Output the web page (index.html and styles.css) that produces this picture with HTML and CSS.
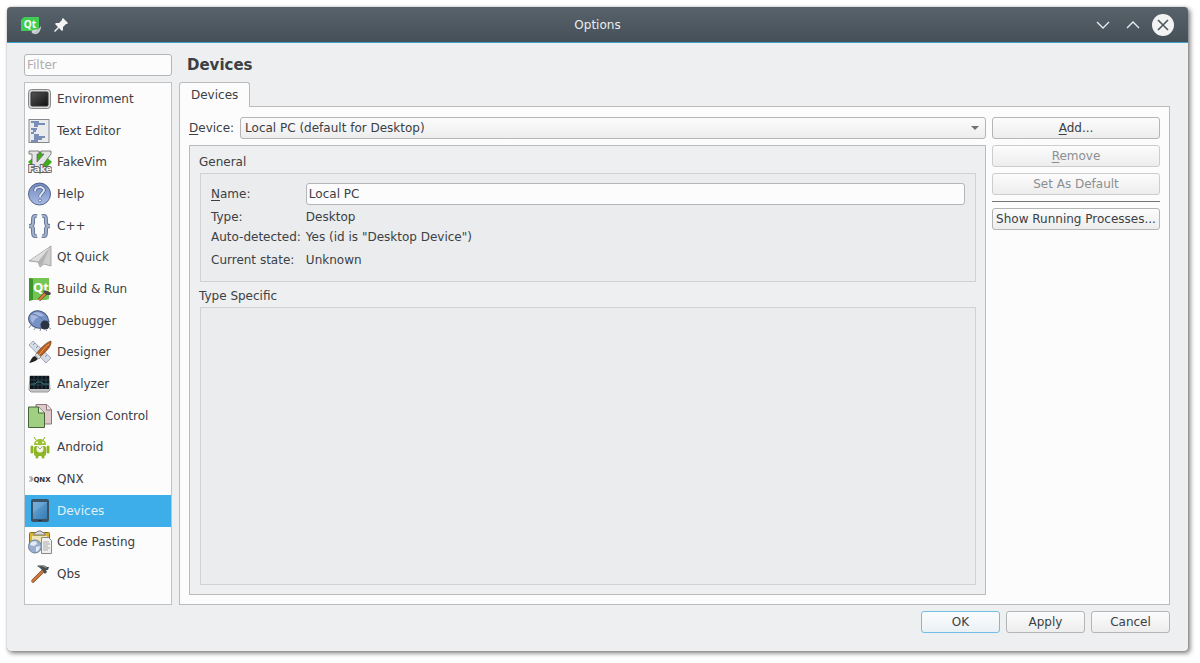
FILE: index.html
```html
<!DOCTYPE html>
<html lang="en">
<head>
  <meta charset="UTF-8">
  <meta name="viewport" content="width=device-width, initial-scale=1.0">
  <title>Options</title>
  <link rel="stylesheet" href="styles.css">
</head>
<body>
  <div class="window">
    <header class="titlebar">
      <div class="title-left">
        <svg class="app-icon" viewBox="0 0 20 20" width="20" height="20">
          <path d="M3 2h15v11l-4 3H0V5z" fill="#41cd52"/>
          <text x="9" y="13" text-anchor="middle" class="qt-text">Qt</text>
          <path d="M20 11c0 5-3 9-7 8-3-1-3-3-1-4 3 0 6-1 8-4z" fill="#d0d3d4"/>
          <path d="M12 19c3-1 5-3 7-6" stroke="#a4a9ac" stroke-width=".8" fill="none"/>
        </svg>
        <svg viewBox="0 0 16 16" width="16" height="16">
          <path d="M10 1l5 5-1 1-1 0-3 3 0 3-1 1-3-3-4 4-1-1 4-4-3-3 1-1h3l3-3 0-1z" fill="#f3f4f4"/>
        </svg>
      </div>
      <span class="title">Options</span>
      <div class="title-right">
        <button class="win-btn" aria-label="Minimize">
          <svg viewBox="0 0 22 22" width="22" height="22"><path d="M5 8l6 6 6-6" fill="none" stroke="#eceeef" stroke-width="1.3"/></svg>
        </button>
        <button class="win-btn" aria-label="Maximize">
          <svg viewBox="0 0 22 22" width="22" height="22"><path d="M5 14l6-6 6 6" fill="none" stroke="#eceeef" stroke-width="1.3"/></svg>
        </button>
        <button class="win-btn" aria-label="Close">
          <svg viewBox="0 0 22 22" width="22" height="22"><circle cx="11" cy="11" r="11" fill="#f2f3f3"/><path d="M6 6l10 10M16 6L6 16" stroke="#4d565d" stroke-width="1.6"/></svg>
        </button>
      </div>
    </header>

    <main class="content">
      <aside class="sidebar">
        <input class="filter" type="text" placeholder="Filter" aria-label="Filter">
        <nav class="categories">
          <a href="#environment">
            <svg viewBox="0 0 24 24">
              <defs><linearGradient id="screen" x1="0" y1="0" x2="1" y2="1"><stop offset="0" stop-color="#555"/><stop offset=".5" stop-color="#333"/><stop offset="1" stop-color="#111"/></linearGradient></defs>
              <rect x=".5" y="2.5" width="22" height="19" rx="3" fill="#d8d8d8" stroke="#888"/>
              <rect x="3" y="5" width="17" height="14" rx="1" fill="url(#screen)" stroke="#333"/>
            </svg>
            Environment
          </a>
          <a href="#text-editor">
            <svg viewBox="0 0 24 24">
              <rect x="1" y=".5" width="20" height="23" fill="#e9ebed" stroke="#85898e"/>
              <path d="M3 3h8M6 5h11M6 7h4M3 10h6M5 12h3M3 14h3M6 16h5M6 18h11M6 20h8M3 22h7" stroke="#5672a5" stroke-width="1.3"/>
            </svg>
            Text Editor
          </a>
          <a href="#fakevim">
            <svg viewBox="0 0 24 24">
              <path d="M12 1l12 11-12 12L0 12z" fill="#3fae1b"/>
              <path d="M1 1h10v3H9v8l7-8h-3V1h10v3L11 20H4V4H1z" fill="#e4e6e5" stroke="#666" stroke-width=".8"/>
              <text x="12" y="22" text-anchor="middle" class="fake-text">Fake</text>
            </svg>
            FakeVim
          </a>
          <a href="#help">
            <svg viewBox="0 0 24 24">
              <defs><linearGradient id="help" x1="0" y1="0" x2="0" y2="1"><stop offset="0" stop-color="#7289bd"/><stop offset="1" stop-color="#a9bce6"/></linearGradient></defs>
              <circle cx="11.5" cy="12" r="11" fill="url(#help)" stroke="#53658c"/>
              <path d="M7 9c0-5 9-5 9-1 0 3-4 3-4 7" fill="none" stroke="#4d5f84" stroke-width="3.4"/>
              <path d="M7 9c0-5 9-5 9-1 0 3-4 3-4 7" fill="none" stroke="#dfe6f5" stroke-width="2"/>
              <circle cx="12" cy="18.5" r="1.5" fill="#dfe6f5" stroke="#4d5f84" stroke-width=".7"/>
            </svg>
            Help
          </a>
          <a href="#cpp">
            <svg viewBox="0 0 24 24">
              <path d="M9 2C5 1 5 4 5 7v2c0 2-2 3-4 3 2 0 4 1 4 3v2c0 3 0 6 4 5M14 2c4-1 4 2 4 5v2c0 2 2 3 4 3-2 0-4 1-4 3v2c0 3 0 6-4 5" fill="none" stroke="#66799c" stroke-width="4"/>
              <path d="M9 2C5 1 5 4 5 7v2c0 2-2 3-4 3 2 0 4 1 4 3v2c0 3 0 6 4 5M14 2c4-1 4 2 4 5v2c0 2 2 3 4 3-2 0-4 1-4 3v2c0 3 0 6-4 5" fill="none" stroke="#a3b0c9" stroke-width="2"/>
            </svg>
            C++
          </a>
          <a href="#qt-quick">
            <svg viewBox="0 0 24 24">
              <path d="M23 1v20l-7-2-4 3-2-5-9-1z" fill="#cecece" stroke="#999" stroke-width=".8"/>
              <path d="M22 2L10 17l2 5 3-4z" fill="#b3b3b3"/>
              <path d="M22 2L3 15l7 1z" fill="#dedede"/>
            </svg>
            Qt Quick
          </a>
          <a href="#build-run">
            <svg viewBox="0 0 24 24">
              <path d="M1 1h20v21l-3 1H1z" fill="#74c654"/>
              <path d="M1 1l4 1v21l-4 1z" fill="#3a9627"/>
              <text x="5" y="15" class="build-text">Qt</text>
              <path d="M11 23l7-7" stroke="#7c4115" stroke-width="3.2"/>
              <path d="M11 23l7-7" stroke="#d98445" stroke-width="2"/>
              <path d="M15 14c3-1 5 0 8 2l-1 2-2 0-2 0z" fill="#474747"/>
            </svg>
            Build &amp; Run
          </a>
          <a href="#debugger">
            <svg viewBox="0 0 24 24">
              <path d="M3 16l-2 3M8 18l-2 3M13 19l-1 3M20 18l3 2M20 13l2-1M18 21l1 1" stroke="#6b7280" stroke-width=".8"/>
              <ellipse cx="10.5" cy="10.5" rx="10" ry="8.5" transform="rotate(20 10.5 10.5)" fill="#7892c6" stroke="#43577f"/>
              <path d="M3 6c5-5 11-2 13 1-5 0-9 2-11 7-3-3-3-6-2-8z" fill="#a4b7df"/>
              <path d="M3 5c5 0 12 4 14 9" fill="none" stroke="#5f76aa"/>
              <circle cx="17" cy="16" r="4.5" fill="#2b3443"/>
            </svg>
            Debugger
          </a>
          <a href="#designer">
            <svg viewBox="0 0 24 24">
              <path d="M1 5l4-4 18 17-5 5z" fill="#d5dbe5" stroke="#a0a9b8"/>
              <path d="M5 5l2-2M8 8l2-2M11 11l2-2M14 14l2-2M17 17l2-2" stroke="#8994a8"/>
              <path d="M23 1c1 6-7 12-11 16l-4-3C12 9 17 3 23 1z" fill="#b96023" stroke="#6f3b17" stroke-width=".7"/>
              <path d="M21 4c-4 3-7 7-10 11" stroke="#eda15e" fill="none"/>
              <path d="M9 13l4 4-2 2-4-4z" fill="#ddd" stroke="#777" stroke-width=".6"/>
              <path d="M7 16l3 3c-3 3-6 3-9 4 2-2 2-6 6-7z" fill="#222"/>
            </svg>
            Designer
          </a>
          <a href="#analyzer">
            <svg viewBox="0 0 24 24">
              <path d="M2 4h19l1 14-2 2H3l-2-2z" fill="#c4c4c4" stroke="#999"/>
              <rect x="2" y="4" width="19" height="13" fill="#10171c"/>
              <path d="M6 4v13M10 4v13M14 4v13M18 4v13M2 8h19M2 13h19" stroke="#26414b"/>
              <path d="M3 12h4l2-2h4l2 2h6" fill="none" stroke="#397985"/>
            </svg>
            Analyzer
          </a>
          <a href="#version-control">
            <svg viewBox="0 0 24 24">
              <path d="M8 .5h11l4.5 5V20H8z" fill="#dec9cb" stroke="#8d7679"/>
              <path d="M18.5 .5v5.5h5" fill="#f1e4e5" stroke="#8d7679"/>
              <path d="M.5 3h10l6 6v14.5H.5z" fill="#a1cf82" stroke="#47633a"/>
              <path d="M10.5 3v6h6" fill="#dcefce" stroke="#47633a"/>
            </svg>
            Version Control
          </a>
          <a href="#android">
            <svg viewBox="0 0 24 24">
              <path d="M8 5L6 2M15 5l2-3" stroke="#8aab2f"/>
              <path d="M6 10c0-8 12-8 12 0z" fill="#9bc22e"/>
              <rect x="6" y="11" width="12" height="10" rx="2" fill="#8db526"/>
              <path d="M4 12v5M20 12v5M9 20v2M15 20v2" stroke="#8db526" stroke-width="3" stroke-linecap="round"/>
              <circle cx="9" cy="7.5" r="1" fill="#fff"/><circle cx="15" cy="7.5" r="1" fill="#fff"/>
              <circle cx="12" cy="14" r="3.5" fill="#eff3df"/>
              <path d="M10 12l2 2 2-2" fill="none" stroke="#a4a995"/>
            </svg>
            Android
          </a>
          <a href="#qnx">
            <svg viewBox="0 0 24 24">
              <path d="M1 10h3M2 12h3M1 14h3M4 10v4" stroke="#777" stroke-width=".8"/>
              <text x="14" y="15" text-anchor="middle" class="qnx-text">QNX</text>
            </svg>
            QNX
          </a>
          <a href="#devices" class="selected">
            <svg viewBox="0 0 24 24">
              <defs><linearGradient id="tablet" x1="0" y1="0" x2="1" y2="1"><stop offset="0" stop-color="#6eabdb"/><stop offset="1" stop-color="#347bb2"/></linearGradient></defs>
              <rect x="3" y="0" width="18" height="23" rx="2" fill="#3b5366"/>
              <rect x="5" y="3" width="14" height="17" fill="url(#tablet)"/>
              <path d="M5 3h14L5 14z" fill="#82b7df" opacity=".4"/>
              <path d="M10 21.5h4" stroke="#20303d"/>
            </svg>
            Devices
          </a>
          <a href="#code-pasting">
            <svg viewBox="0 0 24 24">
              <rect x="1.5" y="2.5" width="20" height="17" rx="1" fill="#d9b634" stroke="#8a6b13"/>
              <path d="M4 6h15v11H4z" fill="#eee4b6"/>
              <path d="M6 4c0-2 3-1 4-3h3c1 2 4 1 4 3v1H6z" fill="#d5d7da" stroke="#777"/>
              <circle cx="7" cy="16.5" r="6.5" fill="#9aafcf" stroke="#6a7d9a"/>
              <path d="M3 12l5-1 1 3-3 2-4-1zM8 17l4-1-1 4-3 2z" fill="#e3eaf3"/>
              <path d="M13.5 7.5h7l3 3v13h-10z" fill="#f0f0ee" stroke="#888"/>
              <path d="M15 12h6M15 14h7M15 16h5M15 18h7M15 20h5" stroke="#999" stroke-width=".8"/>
            </svg>
            Code Pasting
          </a>
          <a href="#qbs">
            <svg viewBox="0 0 24 24">
              <path d="M5 19L16 8" stroke="#8a4a22" stroke-width="3.4" stroke-linecap="round"/>
              <path d="M5 19L16 8" stroke="#d07c40" stroke-width="2" stroke-linecap="round"/>
              <path d="M9 4c4-2 7-1 10 1l2 0-1 3-2 0 1 2-2 2-3-4-2-2z" fill="#4a4f50"/>
              <path d="M11 4c3-1 5 0 7 2" stroke="#a8adad" fill="none"/>
            </svg>
            Qbs
          </a>
        </nav>
      </aside>

      <section class="page">
        <h1>Devices</h1>
        <div class="tabs"><button class="tab">Devices</button></div>
        <div class="panel">
          <div class="settings">
            <div class="device-row">
              <label for="device"><u>D</u>evice:</label>
              <div class="combo">
                <select id="device"><option>Local PC (default for Desktop)</option></select>
              </div>
            </div>
            <div class="details">
              <h2>General</h2>
              <div class="group general">
                <label for="name"><u>N</u>ame:</label>
                <input id="name" type="text" value="Local PC">
                <span>Type:</span><span>Desktop</span>
                <span>Auto-detected:</span><span>Yes (id is "Desktop Device")</span>
                <span class="state">Current state:</span><span class="state">Unknown</span>
              </div>
              <h2>Type Specific</h2>
              <div class="group specific"></div>
            </div>
          </div>
          <div class="actions">
            <button class="btn"><u>A</u>dd...</button>
            <button class="btn" disabled><u>R</u>emove</button>
            <button class="btn" disabled>Set As Default</button>
            <hr>
            <button class="btn">Show Running Processes...</button>
          </div>
        </div>
      </section>
    </main>

    <footer class="buttons">
      <button class="btn default">OK</button>
      <button class="btn">Apply</button>
      <button class="btn">Cancel</button>
    </footer>
  </div>
</body>
</html>
```
FILE: styles.css
```css
* { box-sizing: border-box; }
body {
  margin: 0;
  padding: 7px 12px 12px 7px;
  min-height: 100vh;
  display: flex;
  background: #fff;
  color: #3b4045;
  font: 12px/16px "DejaVu Sans", sans-serif;
}
button, input, select {
  font: inherit;
  color: inherit;
}
u { text-underline-offset: 2px; }
.window {
  flex: 1;
  display: flex;
  flex-direction: column;
  background: #eeeff0;
  border-radius: 4px;
  box-shadow: 0 0 1px #777, 2px 2px 5px rgba(0,0,0,0.55);
}

/* title bar */
.titlebar {
  display: grid;
  grid-template-columns: 1fr auto 1fr;
  align-items: center;
  height: 36px;
  padding: 1px 14px 0;
  background: linear-gradient(#58626a, #465058);
  border-bottom: 1px solid #3c9ccc;
  border-radius: 4px 4px 0 0;
  color: #eceeef;
}
.title-left, .title-right {
  display: flex;
  align-items: center;
  gap: 12px;
}
.title-right {
  justify-content: flex-end;
  gap: 8px;
}
.win-btn {
  display: flex;
  padding: 0;
  border: 0;
  background: none;
}
.qt-text { font: bold 10px "Open Sans", sans-serif; fill: #fff; }
.fake-text { font: bold 9px "DejaVu Sans", sans-serif; fill: #f0f0f0; stroke: #666; stroke-width: 2px; paint-order: stroke; }
.build-text { font: bold 13px "Open Sans", sans-serif; fill: #fff; }
.qnx-text { font: bold 7px "DejaVu Sans", sans-serif; fill: #333; }

.content {
  flex: 1;
  display: flex;
  gap: 7px;
  padding: 11px 18px 0 17px;
}
.sidebar {
  width: 148px;
  display: flex;
  flex-direction: column;
  gap: 6px;
}
.filter, #name {
  width: 100%;
  height: 22px;
  padding: 0 2px;
  border: 1px solid #b3b5b6;
  border-radius: 3px;
  background: #fcfcfc;
}
.filter::placeholder { color: #acaeaf; }
.categories {
  flex: 1;
  display: flex;
  flex-direction: column;
  padding-bottom: 14px;
  border: 1px solid #bfc1c2;
  background: #fcfcfc;
}
.categories a {
  flex: 1;
  display: flex;
  align-items: center;
  gap: 5px;
  padding-left: 3px;
  color: inherit;
  text-decoration: none;
}
.categories svg {
  width: 24px;
  height: 24px;
}
.categories .selected {
  background: #3daee9;
  color: #e3f1f8;
}

/* settings page */
.page {
  flex: 1;
  display: flex;
  flex-direction: column;
}
h1 {
  margin: 0 0 6px 8px;
  font-size: 15px;
  line-height: 22px;
}
.tabs { display: flex; }
.tab {
  height: 25px;
  margin-bottom: -1px;
  padding: 0 11px;
  border: 1px solid #b9bbbc;
  border-bottom: 0;
  border-radius: 3px 3px 0 0;
  background: #fcfcfc;
  z-index: 1;
}
.panel {
  flex: 1;
  display: flex;
  gap: 6px;
  padding: 10px 9px 9px;
  border: 1px solid #b9bbbc;
  background: #fcfcfc;
}
.settings {
  flex: 1;
  display: flex;
  flex-direction: column;
  gap: 6px;
}
.device-row {
  display: flex;
  align-items: center;
  gap: 6px;
}
.combo {
  flex: 1;
  display: grid;
  align-items: center;
}
.combo select, .combo::after { grid-area: 1 / 1; }
.combo::after {
  content: "";
  justify-self: end;
  margin-right: 7px;
  border: 4px solid transparent;
  border-top-color: #6d7275;
  border-bottom: 0;
  pointer-events: none;
}
.combo select {
  width: 100%;
  height: 22px;
  padding: 0 4px;
  border: 1px solid #b3b5b6;
  border-radius: 3px;
  background: linear-gradient(#fcfcfc, #ededee);
  appearance: none;
}
.details {
  flex: 1;
  display: flex;
  flex-direction: column;
  padding: 8px 9px 9px;
  border: 1px solid #b9bbbc;
  background: #eeeff0;
}
h2 {
  margin: 0 0 3px;
  font-size: 12px;
  font-weight: normal;
  line-height: 16px;
}
.group {
  margin-left: 1px;
  border: 1px solid #d0d2d3;
  background: #ebeced;
}
.general {
  display: grid;
  grid-template-columns: auto 1fr;
  column-gap: 5px;
  row-gap: 4px;
  align-items: center;
  margin-bottom: 6px;
  padding: 9px 10px 13px;
}
.general label, .general span { white-space: nowrap; }
.state { margin-top: 3px; }
.specific { flex: 1; }
.actions {
  width: 168px;
  display: flex;
  flex-direction: column;
  gap: 6px;
}
.btn {
  height: 22px;
  padding: 0 2px;
  border: 1px solid #b3b5b6;
  border-radius: 3px;
  background: linear-gradient(#fcfcfc, #ededee);
  white-space: nowrap;
}
.btn:disabled {
  border-color: #cbcdce;
  color: #8b8f91;
}
.actions hr {
  width: 100%;
  margin: 0;
  border: 0;
  border-top: 1px solid #747779;
}
.buttons {
  display: flex;
  justify-content: flex-end;
  gap: 6px;
  padding: 6px 18px 18px;
}
.buttons .btn { width: 79px; }
.buttons .default {
  border-color: #6fbfe6;
  background: linear-gradient(#fcfcfc, #e9f1f5);
}
```
